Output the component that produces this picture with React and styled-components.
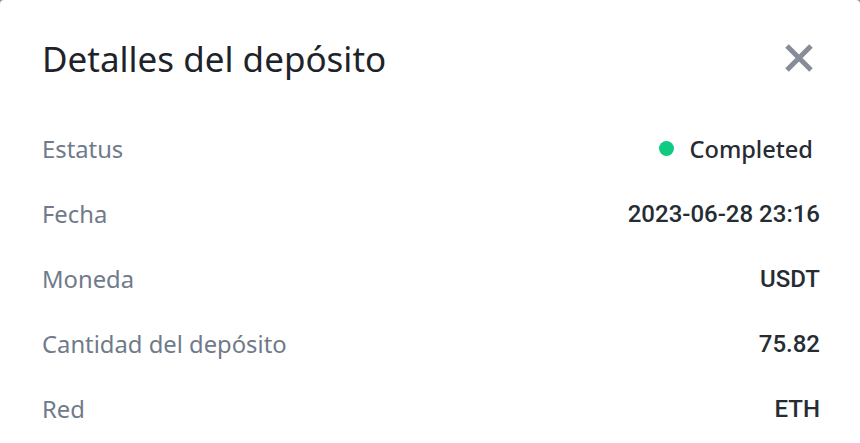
import React from 'react';
import styled, { createGlobalStyle } from 'styled-components';

const GlobalStyle = createGlobalStyle`
  html, body {
    margin: 0;
    padding: 0;
    background: #8b8b8b;
  }
  body {
    font-family: "Noto Sans", "Liberation Sans", sans-serif;
  }
`;

const Modal = styled.div`
  box-sizing: border-box;
  width: 860px;
  height: 443px;
  background: #ffffff;
  border-radius: 4px 4px 0 0;
  padding: 0 40px 0 42px;
  overflow: hidden;
`;

const Header = styled.div`
  display: flex;
  align-items: center;
  justify-content: space-between;
  height: 116px;
`;

const Title = styled.h2`
  margin: 0;
  font-size: 35px;
  font-weight: 400;
  color: #1e2329;
`;

const CloseButton = styled.button`
  display: flex;
  align-items: center;
  justify-content: center;
  width: 40px;
  height: 40px;
  margin-right: 1px;
  padding: 0;
  border: none;
  background: none;
  cursor: pointer;
`;

const Rows = styled.div`
  display: flex;
  flex-direction: column;
`;

const Row = styled.div`
  display: flex;
  align-items: center;
  justify-content: space-between;
  height: 65px;
`;

const Label = styled.span`
  font-size: 23.8px;
  color: #707a8a;
`;

const Value = styled.span`
  display: flex;
  align-items: center;
  gap: 16px;
  font-family: ${props => (props.status ? '"Noto Sans", sans-serif' : 'Roboto, "Liberation Sans", sans-serif')};
  font-size: ${props => (props.status ? '23.6px' : '24px')};
  font-weight: 500;
  color: #262c33;
  margin-right: ${props => (props.status ? '7px' : '0')};
`;

const Dot = styled.span`
  width: 15px;
  height: 15px;
  border-radius: 50%;
  background: #0ecb81;
`;

const rows = [
  { label: 'Estatus', value: 'Completed', status: true },
  { label: 'Fecha', value: '2023-06-28 23:16' },
  { label: 'Moneda', value: 'USDT' },
  { label: 'Cantidad del depósito', value: '75.82' },
  { label: 'Red', value: 'ETH' },
];

export default function App() {
  return (
    <>
      <GlobalStyle />
      <Modal>
        <Header>
          <Title>Detalles del depósito</Title>
          <CloseButton aria-label="Cerrar">
            <svg width="30" height="30" viewBox="0 0 30 30">
              <path d="M3 3 L27 27 M27 3 L3 27" stroke="#868d98" strokeWidth="5" />
            </svg>
          </CloseButton>
        </Header>
        <Rows>
          {rows.map(row => (
            <Row key={row.label}>
              <Label>{row.label}</Label>
              <Value status={row.status}>
                {row.status ? <Dot /> : null}
                {row.value}
              </Value>
            </Row>
          ))}
        </Rows>
      </Modal>
    </>
  );
}
